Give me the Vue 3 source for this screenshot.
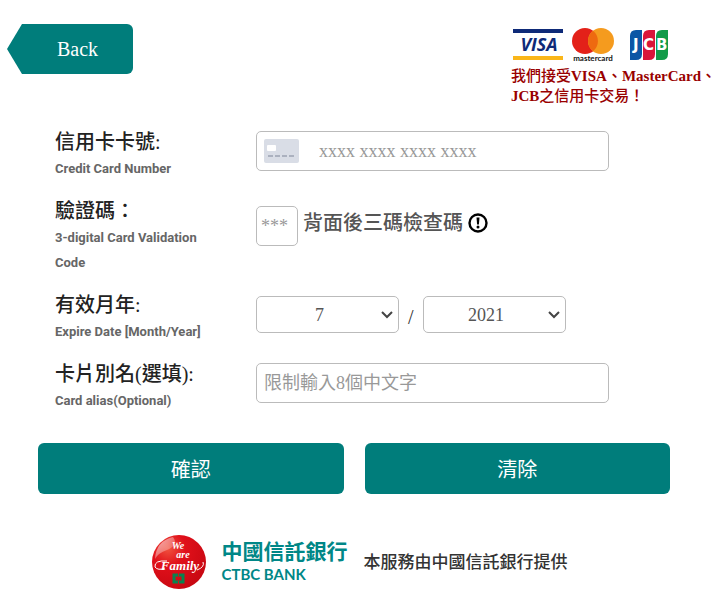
<template>
  <div class="page">
    <header class="top">
      <a href="#" class="back">
        <svg class="back-tip" viewBox="0 0 15 50" aria-hidden="true"><path d="M15 0 0 25 15 50z" /></svg>
        <span class="back-text">Back</span>
      </a>
      <div class="accept">
        <div class="brands">
          <svg width="50" height="32" viewBox="0 0 50 32" role="img" aria-label="VISA">
            <rect width="50" height="4" y="1" fill="#0e2a78" />
            <rect width="50" height="4" y="28" fill="#fab619" />
            <text x="26" y="23" text-anchor="middle" class="visa">VISA</text>
          </svg>
          <svg class="mc" width="44" height="36" viewBox="0 0 44 36" role="img" aria-label="mastercard">
            <circle cx="14" cy="13" r="13" fill="#e32119" />
            <circle cx="30" cy="13" r="13" fill="#f59b1e" />
            <path d="M22 2.800a13 13 0 0 1 0 20.400a13 13 0 0 1 0-20.400z" fill="#ee6a10" />
            <text x="22" y="33" text-anchor="middle" class="mc-text">mastercard</text>
          </svg>
          <svg width="39" height="30" viewBox="0 0 39 30" role="img" aria-label="JCB">
            <path d="M6 0h6v24q0 6-6 6H0V6q0-6 6-6z" fill="#0b56a5" />
            <path d="M19 0h6v24q0 6-6 6h-6V6q0-6 6-6z" fill="#d9163a" />
            <path d="M32 0h6v24q0 6-6 6h-6V6q0-6 6-6z" fill="#129b48" />
            <text y="20" class="jcb"><tspan x="3">J</tspan><tspan x="13">C</tspan><tspan x="26">B</tspan></text>
          </svg>
        </div>
        <p class="notice">我們接受<b>VISA</b>、<b>MasterCard</b>、<br><b>JCB</b>之信用卡交易！</p>
      </div>
    </header>

    <form @submit.prevent>
      <div class="row">
        <label class="name" for="card">信用卡卡號:<small>Credit Card Number</small></label>
        <div class="field">
          <div class="card-box">
            <svg width="35" height="24" viewBox="0 0 35 24" aria-hidden="true">
              <rect width="35" height="24" rx="2" fill="#d9dde6" />
              <rect x="3" y="6" width="9" height="6" rx="1" fill="#fff" />
              <path d="M4 17h5M11 17h5M18 17h5M25 17h5" stroke="#abb1bf" stroke-width="2" />
            </svg>
            <input id="card" v-model="card" type="text" placeholder="xxxx xxxx xxxx xxxx">
          </div>
        </div>
      </div>

      <div class="row">
        <label class="name" for="cvc">驗證碼：<small>3-digital Card Validation Code</small></label>
        <div class="field cvc-field">
          <input id="cvc" v-model="cvc" class="box cvc" type="text" maxlength="3" placeholder="***">
          <div class="hint">
            <span>背面後三碼檢查碼</span>
            <svg width="20" height="20" viewBox="0 0 20 20" aria-hidden="true">
              <circle cx="10" cy="10" r="8.500" fill="none" stroke="#000" stroke-width="2.400" />
              <path d="M8.500 4.500h3l-.6 7H9.100z" />
              <circle cx="10" cy="14" r="1.500" />
            </svg>
          </div>
        </div>
      </div>

      <div class="row">
        <label class="name" for="month">有效月年:<small>Expire Date [Month/Year]</small></label>
        <div class="field date-field">
          <div class="select">
            <select id="month" v-model="month">
              <option v-for="m in 12" :key="m" :value="m">{{ m }}</option>
            </select>
            <svg class="arrow" viewBox="0 0 12 8" aria-hidden="true"><path d="M1 1l5 5 5-5" /></svg>
          </div>
          <span class="slash">/</span>
          <div class="select">
            <select v-model="year" aria-label="Year">
              <option v-for="y in years" :key="y" :value="y">{{ y }}</option>
            </select>
            <svg class="arrow" viewBox="0 0 12 8" aria-hidden="true"><path d="M1 1l5 5 5-5" /></svg>
          </div>
        </div>
      </div>

      <div class="row">
        <label class="name" for="alias">卡片別名(選填):<small>Card alias(Optional)</small></label>
        <div class="field">
          <input id="alias" v-model="alias" class="box" type="text" maxlength="8" placeholder="限制輸入8個中文字">
        </div>
      </div>

      <div class="buttons">
        <button type="submit">確認</button>
        <button type="button" @click="clear">清除</button>
      </div>
    </form>

    <footer class="bank">
      <svg width="54" height="54" viewBox="0 0 54 54" role="img" aria-label="We are Family">
        <defs>
          <radialGradient id="ball" cx="0.3" cy="0.25" r="0.8">
            <stop offset="0" stop-color="#f0523f" />
            <stop offset="0.4" stop-color="#e0101a" />
            <stop offset="1" stop-color="#c80812" />
          </radialGradient>
          <linearGradient id="shine" x1="0" y1="0" x2="1" y2="1">
            <stop offset="0" stop-color="#fff" stop-opacity="0.7" />
            <stop offset="1" stop-color="#fff" stop-opacity="0" />
          </linearGradient>
        </defs>
        <circle cx="27" cy="27" r="27" fill="url(#ball)" />
        <path d="M3 24Q4 6 21 2Q27 10 15 15Q6 18 3 24z" fill="url(#shine)" />
        <text x="26" y="14" text-anchor="middle" class="script">We</text>
        <text x="31" y="23" text-anchor="middle" class="script">are</text>
        <text x="28" y="35" text-anchor="middle" class="script family">Family</text>
        <path d="M15 26Q2 25 3 32Q6 36 13 33M45 35Q53 32 51 27" fill="none" stroke="#fff" />
        <path d="M22 40h9v7h-9z" fill="none" stroke="#08834f" stroke-width="3" />
        <path d="M26 38h1v3h-1zM26 46h1v3h-1z" fill="#d0101a" />
      </svg>
      <div class="bank-name">
        <strong>中國信託銀行</strong>
        <span>CTBC BANK</span>
      </div>
      <p>本服務由中國信託銀行提供</p>
    </footer>
  </div>
</template>

<script setup>
import { ref } from "vue";

const card = ref("");
const cvc = ref("");
const month = ref(7);
const year = ref(2021);
const alias = ref("");

const years = Array.from({ length: 12 }, (_, i) => 2021 + i);

const clear = () => {
  card.value = "";
  cvc.value = "";
  alias.value = "";
  month.value = 7;
  year.value = 2021;
};
</script>

<style>
body {
  margin: 0;
  background: #fff;
}
</style>

<style scoped>
.page {
  font-family: "Liberation Serif", "Noto Sans CJK TC", serif;
  color: #333;
}

.page * {
  box-sizing: border-box;
}

.top {
  display: flex;
  justify-content: space-between;
  align-items: flex-start;
  padding: 24px 0 0 7px;
}

.back {
  display: flex;
  color: #fff;
  font-size: 20px;
  line-height: 50px;
  text-decoration: none;
}

.back-tip {
  width: 15px;
  height: 50px;
  fill: #007d7b;
}

.back-text {
  padding: 0 35px;
  background: #007d7b;
  border-radius: 0 6px 6px 0;
}

.accept {
  width: 210px;
  padding-top: 3px;
}

.brands {
  display: flex;
  align-items: flex-start;
  padding: 1px 0 2px 2px;
  gap: 8px;
}

.brands svg:last-child {
  margin: 2px 0 0 7px;
}

.visa {
  font: italic bold 18px "Open Sans", sans-serif;
  fill: #0e2a78;
}

.mc-text {
  font: bold 8px "Lato", sans-serif;
  fill: #111;
}

.jcb {
  font: bold 15px "DejaVu Sans", sans-serif;
  fill: #fff;
}

.notice {
  margin: 0;
  color: #900;
  font-size: 15px;
  font-weight: 500;
  line-height: 20px;
  white-space: nowrap;
}

form {
  padding: 23px 51px 0 38px;
}

.row {
  display: flex;
  gap: 40px;
  padding: 0 61px 17px 17px;
}

.name {
  width: 161px;
  flex: none;
  color: #222;
  font-size: 20px;
  font-weight: 500;
  line-height: 27px;
}

.name small {
  display: block;
  color: #666;
  font-family: "Roboto", "Liberation Sans", sans-serif;
  font-size: 13px;
  font-weight: bold;
  line-height: 25px;
}

.field {
  flex: 1;
  padding-top: 2px;
}

input,
select {
  width: 100%;
  padding: 0;
  border: 0;
  background: transparent;
  color: #555;
  font-family: inherit;
  font-size: 18px;
}

input::placeholder {
  color: #999;
  opacity: 1;
}

.box,
.card-box,
.select {
  border: 1px solid #bbb;
  border-radius: 5px;
}

.box {
  display: block;
  height: 40px;
  padding: 0 7px;
}

.card-box {
  display: flex;
  align-items: center;
  gap: 20px;
  height: 40px;
  padding: 0 7px;
}

.card-box svg {
  flex: none;
}

.cvc-field {
  display: flex;
  align-items: flex-start;
  gap: 5px;
  padding-top: 8px;
}

.cvc {
  width: 42px;
  flex: none;
  padding: 0 4px;
}

.hint {
  display: flex;
  align-items: center;
  gap: 5px;
  color: #555;
  font-size: 20px;
  font-weight: 500;
  line-height: 34px;
}

.date-field {
  display: flex;
  align-items: flex-start;
  gap: 9px;
  padding-top: 4px;
}

.select {
  display: flex;
  position: relative;
  width: 143px;
  height: 37px;
}

select {
  appearance: none;
  padding-right: 16px;
  text-align: center;
  text-align-last: center;
}

.arrow {
  position: absolute;
  top: 14px;
  right: 5px;
  width: 12px;
  height: 8px;
  fill: none;
  stroke: #444;
  stroke-width: 2;
  pointer-events: none;
}

.slash {
  padding-top: 10px;
  font-size: 20px;
}

.buttons {
  display: grid;
  grid-template-columns: 1fr 1fr;
  gap: 21px;
  padding-top: 13px;
}

button {
  height: 51px;
  border: 0;
  border-radius: 6px;
  background: #007d7b;
  color: #fff;
  font-family: inherit;
  font-size: 20px;
}

.bank {
  display: flex;
  justify-content: center;
  align-items: center;
  gap: 16px;
  padding: 41px 2px 10px 0;
}

.bank p {
  margin: 0;
  padding-bottom: 4px;
  font-size: 17px;
  font-weight: 500;
}

.bank-name {
  display: flex;
  flex-direction: column;
  color: #008787;
}

.bank-name strong {
  font-size: 21px;
  line-height: 24px;
}

.bank-name span {
  font-family: "Lato", sans-serif;
  font-size: 15px;
  font-weight: bold;
  line-height: 20px;
}

.script {
  font: italic bold 10px "Liberation Serif", serif;
  fill: #fff;
}

.family {
  font-size: 13px;
}
</style>
